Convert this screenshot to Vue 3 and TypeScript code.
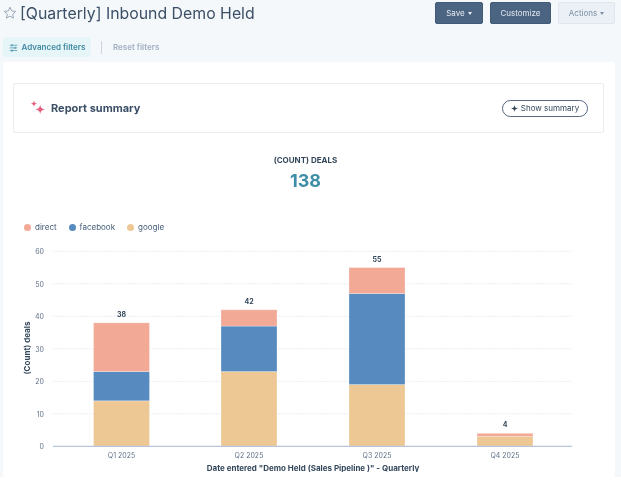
<script setup lang="ts">
interface Quarter { label: string; google: number; facebook: number; direct: number; x: number }
const zeroY = 206.3
const unit = 3.25
const barW = 56
const quarters: Quarter[] = [
  { label: 'Q1 2025', google: 14, facebook: 9, direct: 15, x: 90.5 },
  { label: 'Q2 2025', google: 23, facebook: 14, direct: 5, x: 218 },
  { label: 'Q3 2025', google: 19, facebook: 28, direct: 8, x: 346 },
  { label: 'Q4 2025', google: 3, facebook: 0, direct: 1, x: 474 },
]
const ticks = [0, 10, 20, 30, 40, 50, 60]
const legend = [
  { name: 'direct', color: '#f2a996' },
  { name: 'facebook', color: '#578bbf' },
  { name: 'google', color: '#eec894' },
]
function y(v: number): number { return zeroY - v * unit }
function total(q: Quarter): number { return q.google + q.facebook + q.direct }
</script>

<template>
  <div class="page">
    <header class="top">
      <div class="title-wrap">
        <svg class="star" viewBox="0 0 14 14" width="14" height="14">
          <path d="M7 1.2l1.700 3.700 4 .5-3 2.700.8 4-3.500-2-3.500 2 .8-4-3-2.700 4-.5z" fill="none" stroke="#9aa7b6" stroke-width="1" stroke-linejoin="round" />
        </svg>
        <h1>[Quarterly] Inbound Demo Held</h1>
      </div>
      <div class="actions">
        <button class="btn dark save">Save <i class="caret"></i></button>
        <button class="btn dark customize">Customize</button>
        <button class="btn light act">Actions <i class="caret"></i></button>
      </div>
    </header>

    <div class="filters">
      <button class="adv">
        <svg viewBox="0 0 12 12" width="9" height="9">
          <path d="M1 3h10M1 6.500h10M1 10h10" stroke="#4b93ab" stroke-width="1" />
          <path d="M4 1.500v3M8 5v3M4 8.500v3" stroke="#4b93ab" stroke-width="1.400" />
        </svg>
        Advanced filters
      </button>
      <span class="sep"></span>
      <span class="reset">Reset filters</span>
    </div>

    <main class="card">
      <section class="summary">
        <div class="summary-title">
          <svg viewBox="0 0 16 16" width="16" height="16">
            <path d="M4 0.500c.4 2.200 1 2.800 3.200 3.200-2.200.4-2.800 1-3.200 3.200-.4-2.200-1-2.800-3.200-3.200 2.200-.4 2.800-1 3.200-3.200z" fill="#e8607f" />
            <path d="M10.200 4.500c.5 3.300 1.500 4.300 4.900 4.900-3.400.6-4.400 1.600-4.900 4.900-.5-3.300-1.500-4.300-4.900-4.900 3.400-.6 4.400-1.600 4.900-4.900z" fill="#e8607f" />
          </svg>
          <strong>Report summary</strong>
        </div>
        <button class="pill">
          <svg viewBox="0 0 10 10" width="7" height="7">
            <path d="M5 0c.5 3.200 1.300 4.300 5 5-3.700.7-4.500 1.800-5 5-.5-3.200-1.300-4.300-5-5 3.700-.7 4.500-1.800 5-5z" fill="#33475b" />
          </svg>
          Show summary
        </button>
      </section>

      <section class="kpi">
        <div class="kpi-label">(COUNT) DEALS</div>
        <div class="kpi-value">138</div>
      </section>

      <ul class="legend">
        <li v-for="l in legend" :key="l.name">
          <span class="dot" :style="{ background: l.color }"></span>{{ l.name }}
        </li>
      </ul>

      <svg class="chart" width="612" height="232" viewBox="0 0 612 232">
        <g v-for="t in ticks" :key="t">
          <line v-if="t > 0" x1="50" x2="569" :y1="y(t)" :y2="y(t)" class="grid" />
          <text x="41" :y="y(t) + 3" text-anchor="end" class="tick">{{ t }}</text>
        </g>
        <g v-for="q in quarters" :key="q.label">
          <rect :x="q.x" :y="y(q.google)" :width="barW" :height="q.google * unit" fill="#eec894" class="seg" />
          <rect v-if="q.facebook" :x="q.x" :y="y(q.google + q.facebook)" :width="barW" :height="q.facebook * unit" fill="#578bbf" class="seg" />
          <rect :x="q.x" :y="y(total(q))" :width="barW" :height="q.direct * unit" fill="#f2a996" class="seg" />
          <text :x="q.x + barW / 2" :y="y(total(q)) - 6" text-anchor="middle" class="sum">{{ total(q) }}</text>
          <text :x="q.x + barW / 2" y="218" text-anchor="middle" class="tick">{{ q.label }}</text>
        </g>
        <line x1="50" x2="569" :y1="zeroY" :y2="zeroY" class="axis" />
        <text transform="translate(27 108) rotate(-90)" text-anchor="middle" class="axis-title">(Count) deals</text>
        <text x="310" y="231" text-anchor="middle" class="axis-title">Date entered "Demo Held (Sales Pipeline )" - Quarterly</text>
      </svg>
    </main>
  </div>
</template>

<style>
html, body { background: #fff; }
</style>

<style scoped>
.page {
  width: 621px;
  height: 477px;
  overflow: hidden;
  background: #f5f8fa;
  font-family: Inter, "Noto Sans", sans-serif;
  color: #33475b;
  box-sizing: border-box;
  padding: 2px 6px 0 3px;
  filter: blur(0.35px);
}
.top { display: flex; justify-content: space-between; align-items: flex-start; height: 35px; }
.title-wrap { display: flex; align-items: center; gap: 3px; height: 22px; }
.star { flex: none; }
h1 { margin: 0; font-size: 15.850px; font-weight: 400; color: #3b4f66; white-space: nowrap; }
.actions { display: flex; gap: 7px; }
.btn {
  height: 22px;
  font: 400 8px Inter, sans-serif;
  border-radius: 2px;
  padding: 0;
  display: flex;
  align-items: center;
  justify-content: center;
  gap: 3px;
}
.dark { background: #4b6482; border: 1px solid #425b77; color: #e6ecf2; }
.light { background: #eaf0f6; border: 1px solid #e0e6ee; color: #7c8ea3; }
.save { width: 48px; }
.customize { width: 61px; }
.act { width: 57px; }
.caret { width: 0; height: 0; border: 2.500px solid transparent; border-top: 3px solid currentColor; border-bottom: 0; }

.filters { display: flex; align-items: center; height: 20px; }
.adv {
  width: 88px;
  height: 20px;
  border: 0;
  padding: 0;
  border-radius: 2px;
  background: #e5f5f8;
  color: #4089a3;
  font: 600 8px Inter, sans-serif;
  display: flex;
  align-items: center;
  justify-content: center;
  gap: 4px;
}
.sep { width: 1px; height: 13px; margin: 0 11px 0 10px; background: #cbd6e2; }
.reset { font-size: 8px; font-weight: 600; color: #a0afc2; }

.card {
  margin-top: 5px;
  width: 612px;
  height: 415px;
  background: #fff;
  border-radius: 2px;
  box-sizing: border-box;
  padding-top: 21px;
}
.summary {
  margin-left: 10px;
  width: 591px;
  height: 50px;
  box-sizing: border-box;
  border: 1px solid #e8edf2;
  border-radius: 2px;
  display: flex;
  align-items: center;
  justify-content: space-between;
  padding: 0 15px 0 16px;
}
.summary-title { display: flex; align-items: center; gap: 5px; }
.summary-title strong { font-size: 11px; font-weight: 700; color: #3b4f66; }
.pill {
  width: 86px;
  height: 17px;
  border: 1px solid #56687d;
  border-radius: 9px;
  background: #fff;
  color: #33475b;
  font: 400 8px Inter, sans-serif;
  padding: 0;
  display: flex;
  align-items: center;
  justify-content: center;
  gap: 3px;
}
.kpi { text-align: center; margin-top: 22px; margin-right: 7px; }
.kpi-label { font-size: 8px; font-weight: 700; color: #33475b; line-height: 10px; }
.kpi-value { font-size: 18px; font-weight: 700; color: #3f8ea8; line-height: 26px; margin-top: 3px; }
.legend {
  list-style: none;
  margin: 27px 0 0 21px;
  padding: 0;
  display: flex;
  gap: 12px;
  font-size: 8px;
  color: #425b76;
  line-height: 12px;
}
.legend li { display: flex; align-items: center; gap: 4px; }
.dot { width: 7px; height: 7px; border-radius: 50%; display: block; }
.chart { display: block; margin-top: 7px; }
.grid { stroke: #e9edf2; stroke-width: 1; stroke-dasharray: 2 1; }
.axis { stroke: #b8c5de; stroke-width: 1.300; }
.seg { stroke: #fff; stroke-opacity: 0.35; stroke-width: 0.800; }
.tick { font-size: 7px; fill: #5d7087; font-family: Inter, sans-serif; }
.sum { font-size: 7px; font-weight: 700; fill: #33475b; font-family: Inter, sans-serif; }
.axis-title { font-size: 8px; font-weight: 700; fill: #33475b; font-family: Inter, sans-serif; }
</style>
